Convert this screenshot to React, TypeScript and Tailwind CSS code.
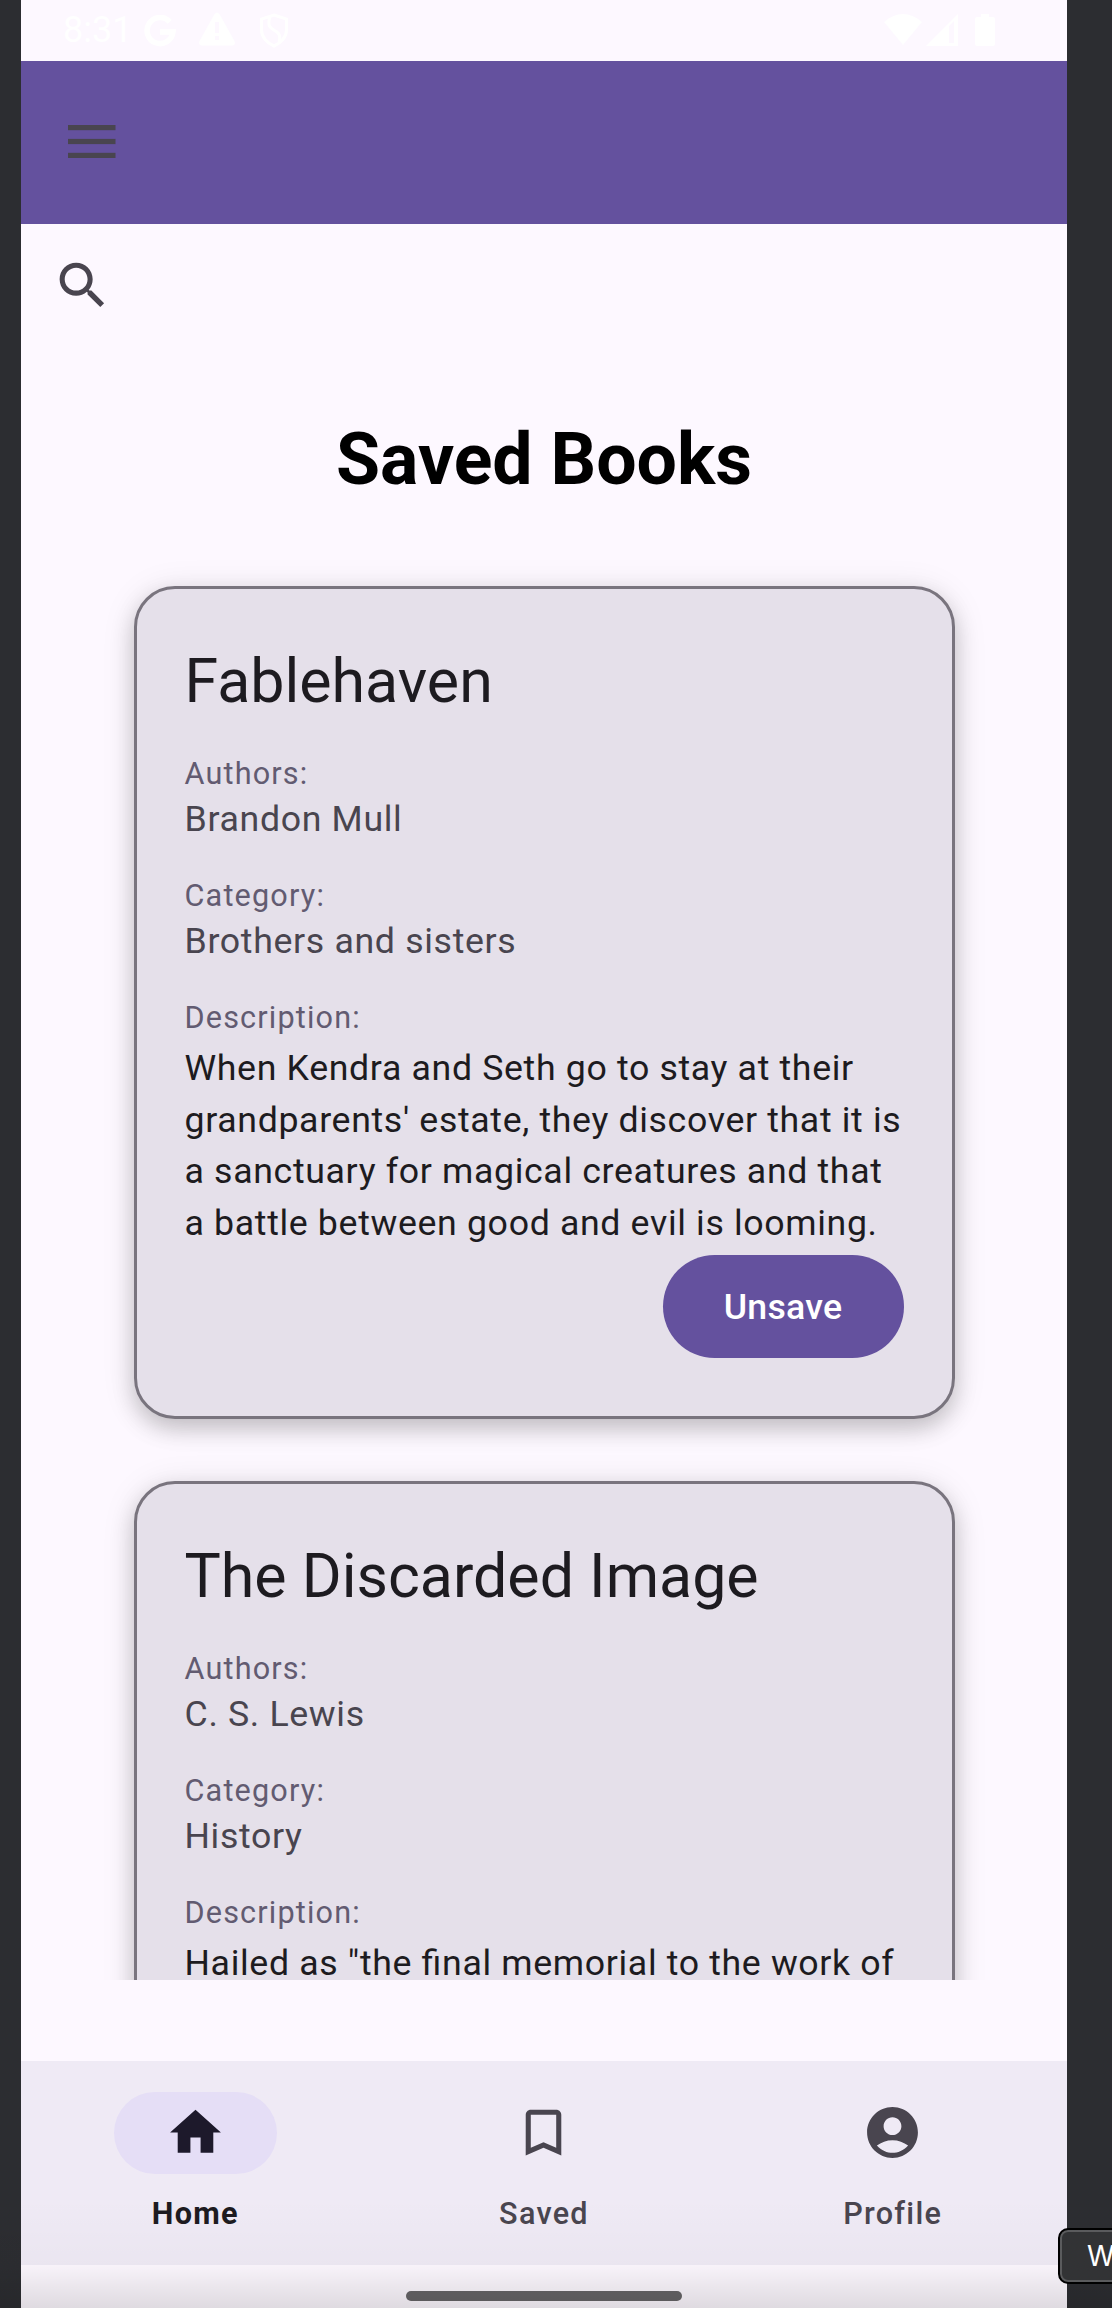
type Book = { title: string; authors: string; category: string; lines: string[]; action?: string };

const books: Book[] = [
  {
    title: "Fablehaven",
    authors: "Brandon Mull",
    category: "Brothers and sisters",
    lines: [
      "When Kendra and Seth go to stay at their",
      "grandparents' estate, they discover that it is",
      "a sanctuary for magical creatures and that",
      "a battle between good and evil is looming.",
    ],
    action: "Unsave",
  },
  {
    title: "The Discarded Image",
    authors: "C. S. Lewis",
    category: "History",
    lines: ['Hailed as "the final memorial to the work of'],
  },
];

function StatusBar() {
  return (
    <div className="flex h-[61px] shrink-0 items-start pl-[42px] text-white">
      <span className="mt-[9px] w-[66px] whitespace-nowrap text-[36px] leading-[42px]">8:31</span>
      <svg className="ml-[15px] mt-[15px]" width="32" height="32" viewBox="0 0 32 32" fill="none" stroke="white" strokeWidth="5.5">
        <path d="M25.7 6.8A13 13 0 1 0 29 17H16" />
      </svg>
      <svg className="ml-[22px] mt-[12px]" width="38" height="34" viewBox="0 0 38 34">
        <path
          fill="white"
          fillRule="evenodd"
          d="M16.5 2Q19 -1 21.5 2L36.5 29Q38 33.500 34 33.500H4Q0 33.500 1.500 29ZM17 10V21H21V10ZM17 24V28H21V24Z"
        />
      </svg>
      <svg className="ml-[23px] mt-[13px]" width="30" height="35" viewBox="0 0 30 35" fill="none" stroke="white" strokeWidth="3">
        <path d="M15 2L27.500 6V17C27.500 24 22 30 15 33C8 30 2.500 24 2.500 17V6ZM11 4C7 15 14 16 18 19C22 22 21 26 20 29" />
      </svg>
      <svg className="ml-[595px] mt-[14px]" width="38" height="31" viewBox="0 0 38 31" fill="white">
        <path d="M0 8Q19 -8 38 8L19 31Z" />
      </svg>
      <svg className="ml-[4px] mt-[14px]" width="32" height="32" viewBox="0 0 32 32" fill="white">
        <path fillRule="evenodd" d="M32 0V32H0ZM23 12V29H28V7Z" />
      </svg>
      <svg className="ml-[17px] mt-[14px]" width="20" height="32" viewBox="0 0 20 32" fill="white">
        <path d="M6 0H14V3H18Q20 3 20 5V30Q20 32 18 32H2Q0 32 0 30V5Q0 3 2 3H6Z" />
      </svg>
    </div>
  );
}

function Field({ label, value }: { label: string; value: string }) {
  return (
    <div className="mb-[30.2px]">
      <div className="text-[30.6px] leading-[41px] tracking-[1.17px] text-[#625b71]">{label}</div>
      <div className="text-[35.7px] leading-[51px] tracking-[0.66px] text-[#49454f]">{value}</div>
    </div>
  );
}

function BookCard({ book }: { book: Book }) {
  return (
    <article className="h-[833px] shrink-0 rounded-[41px] border-[3px] border-[#79747e] bg-[#e5e0ea] px-[48px] pt-[52px] shadow-[0_10px_22px_rgba(0,0,0,0.18),0_4px_34px_rgba(0,0,0,0.1)]">
      <h2 className="mb-[30px] whitespace-nowrap text-[60.9px] leading-[82px] text-[#1d1b20]">{book.title}</h2>
      <Field label="Authors:" value={book.authors} />
      <Field label="Category:" value={book.category} />
      <div className="text-[30.6px] leading-[41px] tracking-[1.17px] text-[#625b71]">Description:</div>
      <div className="mt-[5px] whitespace-nowrap text-[35.7px] leading-[51.45px] tracking-[0.65px] text-[#1d1b20] [font-feature-settings:'liga'_1]">
        {book.lines.map((line) => (
          <div key={line}>{line}</div>
        ))}
      </div>
      {book.action && (
        <div className="mt-[6px] flex justify-end">
          <button className="h-[103px] w-[241px] rounded-full bg-[#64519e] pt-[2px] text-[35.7px] font-medium tracking-[0.25px] text-white">
            {book.action}
          </button>
        </div>
      )}
    </article>
  );
}

const tabs = [
  {
    name: "Home",
    active: true,
    path: "M10 20v-6h4v6h5v-8h3L12 3 2 12h3v8z",
  },
  {
    name: "Saved",
    active: false,
    path: "M17 3H7c-1.100 0-1.990.900-1.990 2L5 21l7-3 7 3V5c0-1.100-.900-2-2-2zm0 15l-5-2.180L7 18V5h10v13z",
  },
  {
    name: "Profile",
    active: false,
    path: "M12 2C6.480 2 2 6.480 2 12s4.480 10 10 10 10-4.480 10-10S17.520 2 12 2zm0 4c1.930 0 3.500 1.570 3.500 3.500S13.930 13 12 13s-3.500-1.570-3.500-3.500S10.070 6 12 6zm0 14c-2.030 0-4.430-.820-6.140-2.880C7.550 15.800 9.680 15 12 15s4.450.800 6.140 2.120C16.430 19.180 14.030 20 12 20z",
  },
];

function NavBar() {
  return (
    <nav className="grid h-[204px] shrink-0 grid-cols-3 bg-[#efeaf5]">
      {tabs.map((tab) => (
        <div key={tab.name} className="flex flex-col items-center pt-[31px]">
          <div
            className={
              tab.active
                ? "flex h-[82px] w-[163px] items-center justify-center rounded-full bg-[#e5def6] pb-[1px] text-[#1d192b]"
                : "flex h-[82px] w-[163px] items-center justify-center pb-[1px] text-[#49454f]"
            }
          >
            <svg width="61" height="61" viewBox="0 0 24 24" fill="currentColor">
              <path fillRule="evenodd" d={tab.path} />
            </svg>
          </div>
          <div
            className={
              tab.active
                ? "mt-[19px] text-[30.6px] font-bold leading-[41px] tracking-[1.27px] text-[#1d1b20]"
                : "mt-[19px] text-[30.6px] font-medium leading-[41px] tracking-[1.27px] text-[#49454f]"
            }
          >
            {tab.name}
          </div>
        </div>
      ))}
    </nav>
  );
}

export default function App() {
  return (
    <div className="relative h-[2308px] w-[1112px] overflow-hidden bg-[#2c2d31] font-[Roboto,sans-serif]">
      <div className="ml-[21px] flex h-full w-[1046px] flex-col bg-[#fdf8ff]">
        <StatusBar />
        <header className="h-[163px] shrink-0 bg-[#64519e] pl-[47px] pt-[64px]">
          <svg width="48" height="34" viewBox="0 0 48 34" fill="#49454f">
            <rect width="47.500" height="5.200" y="0" />
            <rect width="47.500" height="5.200" y="13.900" />
            <rect width="47.500" height="5.200" y="27.800" />
          </svg>
        </header>
        <div className="h-[185px] shrink-0 pl-[31px] pt-[31px]">
          <svg width="61" height="61" viewBox="0 0 24 24" fill="#49454f">
            <path d="M15.500 14h-.790l-.280-.270C15.410 12.590 16 11.110 16 9.500 16 5.910 13.090 3 9.500 3S3 5.910 3 9.500 5.910 16 9.500 16c1.610 0 3.090-.590 4.230-1.570l.270.280v.790l5 4.990L20.490 19l-4.990-5zm-6 0C7.010 14 5 11.990 5 9.500S7.010 5 9.500 5 14 7.010 14 9.500 11.990 14 9.500 14z" />
          </svg>
        </div>
        <h1 className="h-[142px] shrink-0 whitespace-nowrap text-center text-[71.600px] font-bold leading-[102px] text-black">
          Saved Books
        </h1>
        <main className="flex h-[1429px] shrink-0 flex-col gap-[62px] overflow-hidden px-[112.500px] pt-[35px]">
          {books.map((book) => (
            <BookCard key={book.title} book={book} />
          ))}
        </main>
        <div className="h-[81px] shrink-0" />
        <NavBar />
        <div className="flex grow items-start justify-center pt-[26px]">
          <div className="h-[10px] w-[276px] rounded-full bg-[#666467]" />
        </div>
      </div>
      <div className="pointer-events-none absolute inset-x-0 bottom-0 h-[110px] bg-linear-to-b from-transparent via-black/2 via-60% to-black/12" />
      <div className="absolute left-[1058px] top-[2228px] flex h-[56px] w-[120px] items-center rounded-[10px] border-2 border-black bg-[#323335] pl-[27px] font-[Inter,sans-serif] text-[28px] font-normal text-white shadow-[inset_0_0_0_2px_#5a5b5d]">
        W
      </div>
    </div>
  );
}
